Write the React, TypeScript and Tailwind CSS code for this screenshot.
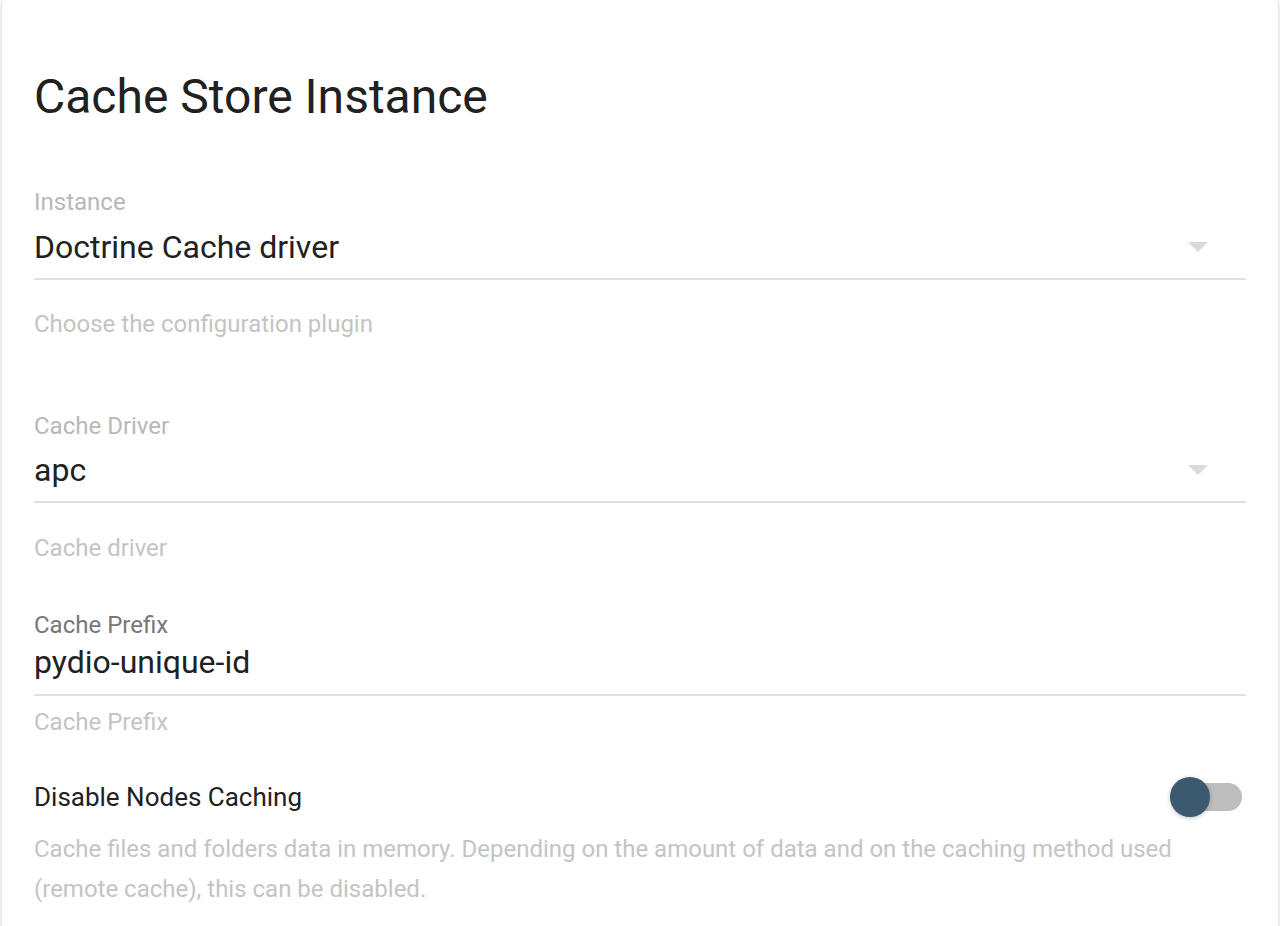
import React, { useState } from 'react';

function Arrow() {
  return (
    <svg width="20" height="10" viewBox="0 0 20 10" className="shrink-0 mr-[38px]">
      <path d="M0 0 L20 0 L10 10 Z" fill="#dadada" />
    </svg>
  );
}

export default function App() {
  const [nodesCaching, setNodesCaching] = useState(false);

  return (
    <div className="min-h-screen bg-white font-['Roboto',sans-serif]">
      <div className="mx-[2px] min-h-[926px] bg-white rounded-[4px] shadow-[0_1px_6px_rgba(0,0,0,0.12),0_1px_4px_rgba(0,0,0,0.12)] px-8 pt-[73px] pb-6">
        <h1 className="text-[48px] leading-none text-[#212121] font-normal">Cache Store Instance</h1>

        {/* Instance select */}
        <div className="mt-[69px]">
          <div className="text-[24px] leading-none text-[#b8b8b8]">Instance</div>
          <div className="mt-[17px] flex items-center justify-between h-8">
            <span className="text-[32px] leading-none text-[#212121]">Doctrine Cache driver</span>
            <Arrow />
          </div>
          <div className="mt-[15px] h-[2px] bg-[#e0e0e0]" />
          <div className="mt-[32px] text-[24px] leading-none text-[#c4c4c4]">Choose the configuration plugin</div>
        </div>

        {/* Cache driver select */}
        <div className="mt-[78px]">
          <div className="text-[24px] leading-none text-[#b8b8b8]">Cache Driver</div>
          <div className="mt-[16px] flex items-center justify-between h-8">
            <span className="text-[32px] leading-none text-[#212121]">apc</span>
            <Arrow />
          </div>
          <div className="mt-[15px] h-[2px] bg-[#e0e0e0]" />
          <div className="mt-[33px] text-[24px] leading-none text-[#c4c4c4]">Cache driver</div>
        </div>

        {/* Cache prefix text field */}
        <div className="mt-[53px]">
          <div className="text-[24px] leading-none text-[#777777]">Cache Prefix</div>
          <div className="mt-[9px] h-8 text-[32px] leading-none text-[#212121]">pydio-unique-id</div>
          <div className="mt-4 h-[2px] bg-[#e0e0e0]" />
          <div className="mt-[14px] text-[24px] leading-none text-[#c4c4c4]">Cache Prefix</div>
        </div>

        {/* Toggle */}
        <div className="mt-[43px] h-10 flex items-center justify-between">
          <span className="text-[26px] leading-none text-[#212121]">Disable Nodes Caching</span>
          <button
            onClick={() => setNodesCaching(!nodesCaching)}
            className="relative w-[76px] h-10 shrink-0 cursor-pointer"
          >
            <span className="absolute left-[5px] right-[4px] top-[6px] h-[28px] rounded-full bg-[#bdbdbd]" />
            <span className="absolute left-0 top-0 w-10 h-10 rounded-full bg-[#3b596f] shadow-[0_1px_4px_rgba(0,0,0,0.25)]" />
          </button>
        </div>
        <p className="mt-[12px] text-[24px] leading-[40px] text-[#c4c4c4] max-w-[1150px]">
          Cache files and folders data in memory. Depending on the amount of data and on the caching method used (remote cache), this can be disabled.
        </p>
      </div>
    </div>
  );
}
